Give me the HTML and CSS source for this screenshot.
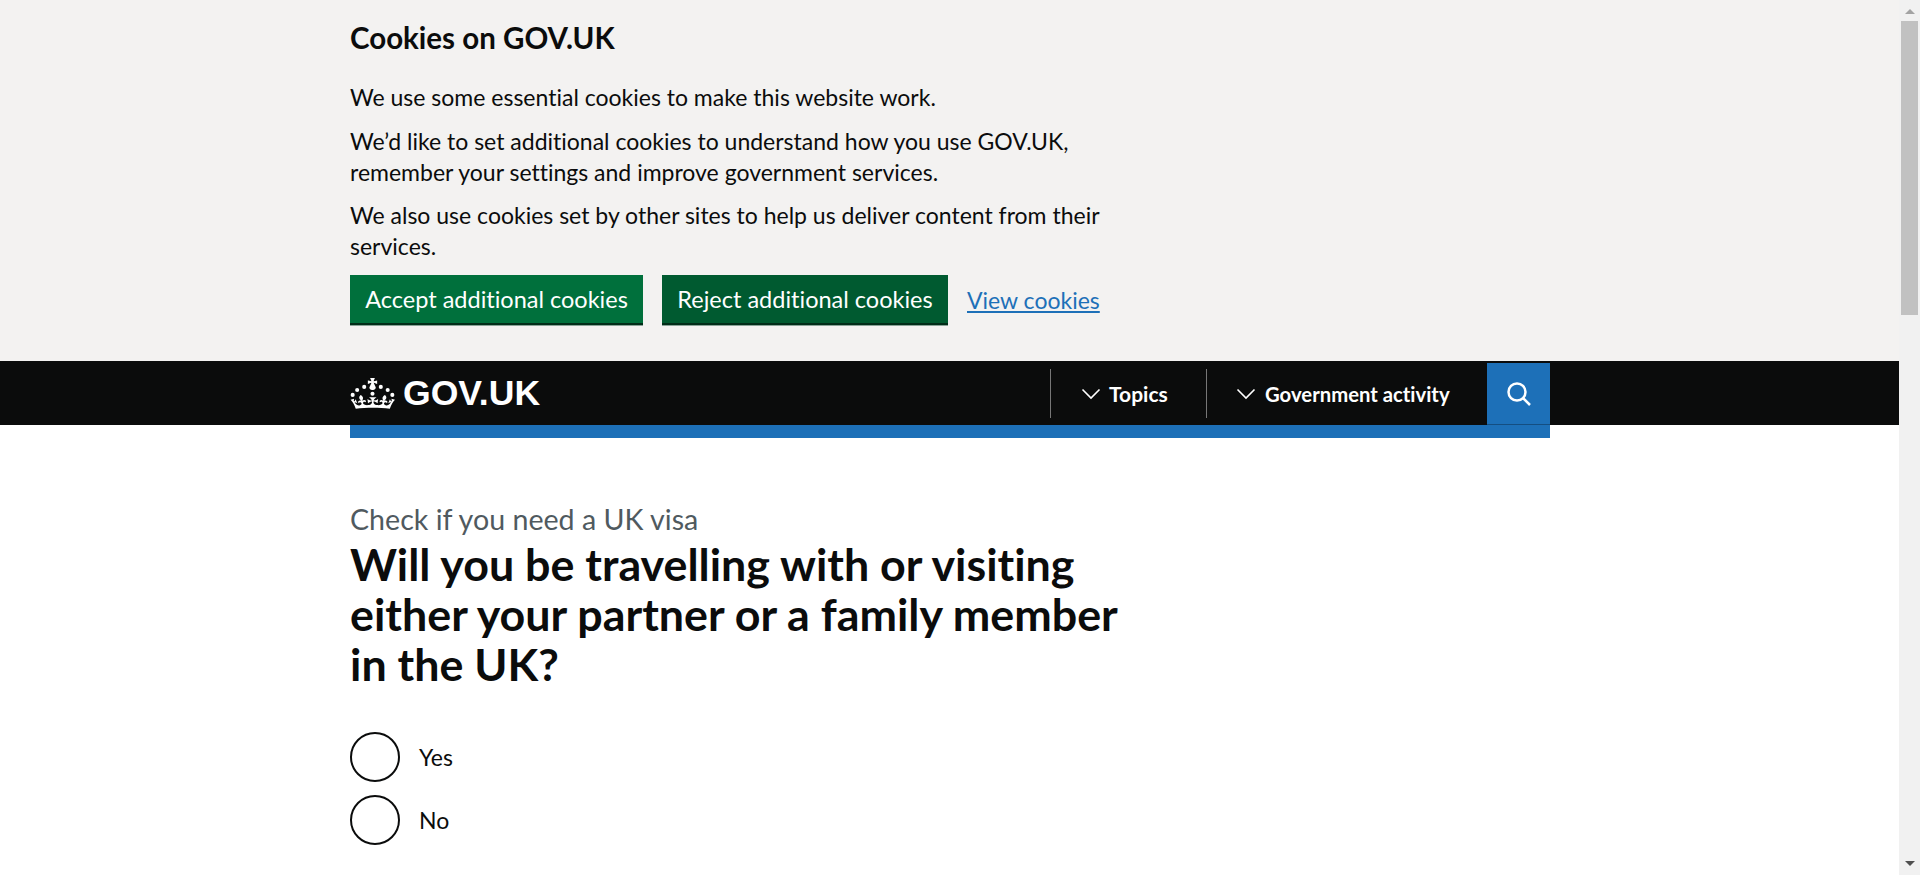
FILE: index.html
```html
<!DOCTYPE html>
<html lang="en">
<head>
<meta charset="utf-8">
<title>Check if you need a UK visa - GOV.UK</title>
<link rel="stylesheet" href="styles.css">
</head>
<body>
<div class="page">
  <section class="cookie-banner">
    <div class="container">
      <h2 class="cookie-title">Cookies on GOV.UK</h2>
      <div class="cookie-text">
        <p>We use some essential cookies to make this website work.</p>
        <p>We’d like to set additional cookies to understand how you use GOV.UK, remember your settings and improve government services.</p>
        <p>We also use cookies set by other sites to help us deliver content from their services.</p>
      </div>
      <div class="cookie-actions">
        <button class="btn btn-accept">Accept additional cookies</button>
        <button class="btn btn-reject">Reject additional cookies</button>
        <a class="cookie-link" href="#">View cookies</a>
      </div>
    </div>
  </section>
  <header class="header">
    <div class="container header-inner">
      <a class="logo" href="#">
        <svg class="crown" viewBox="0 0 32 30.3" preserveAspectRatio="none" aria-hidden="true">
          <ellipse cx="1.9" cy="16.5" rx="1.45" ry="2"/>
          <ellipse cx="5.1" cy="11.7" rx="1.45" ry="2"/>
          <ellipse cx="10.1" cy="8.7" rx="1.45" ry="2"/>
          <ellipse cx="16" cy="15.4" rx="1.45" ry="2"/>
          <ellipse cx="21.9" cy="8.7" rx="1.45" ry="2"/>
          <ellipse cx="26.8" cy="11.7" rx="1.45" ry="2"/>
          <ellipse cx="30.1" cy="16.5" rx="1.45" ry="2"/>
          <path d="M17 4.7l2.3 1.2V2.5l-2.3.7-.2-.2.9-3h-3.4l.9 3-.2.2c-.1.1-2.3-.7-2.3-.7v3.4L15 4.7c.1.1.1.2.2.2l-1.3 4c-.1.2-.1.4-.1.6 0 1.1.8 2 1.9 2.2h.7c1-.2 1.900-1.100 1.900-2.200 0-.2 0-.4-.1-.6l-1.300-4c-.1-.1 0-.2.1-.2z"/>
          <path d="M16 29.2c4.400 0 8.600.3 12.300.8 1.100-4.500 2.400-7 3.700-8.800l-2.500-.9c.2 1.300.3 1.900 0 2.700-.4-.4-.8-1.100-1.100-2.300l-1.200 4c.7-.5 1.300-.8 2-.9-1.100 2.500-2.600 3.100-3.500 3-1.100-.2-1.700-1.200-1.500-2.100.3-1.200 1.500-1.500 2.100-.1 1.100-2.300-.8-3-2-2.300 1.900-1.900 2.100-3.500.6-5.600-2.100 1.600-2.100 3.200-1.200 5.500-1.200-1.400-3.200-.6-2.500 1.600.9-1.400 2.100-.5 1.900.8-.2 1.100-1.700 2.100-3.500 1.900-2.700-.2-2.900-2.100-2.900-3.600.7-.1 1.900.5 2.900 1.900l.4-4.300c-1.100 1.100-2.100 1.400-3.200 1.400.4-1.200 2.100-3 2.100-3h-5.400s1.700 1.900 2.100 3c-1.100 0-2.100-.2-3.200-1.400l.4 4.300c1-1.400 2.200-2 2.900-1.900-.1 1.500-.2 3.400-2.900 3.600-1.900.2-3.400-.8-3.500-1.900-.2-1.300 1-2.200 1.900-.8.7-2.300-1.200-3-2.500-1.600.9-2.200.9-3.900-1.200-5.500-1.500 2-1.300 3.700.6 5.600-1.200-.7-3.100 0-2 2.300.6-1.400 1.800-1.100 2.100.1.2.9-.3 1.900-1.500 2.100-.9.2-2.400-.5-3.500-3 .6 0 1.200.3 2 .9l-1.200-4c-.3 1.100-.7 1.900-1.100 2.300-.3-.8-.2-1.400 0-2.700l-2.500.9c1.300 1.900 2.700 4.300 3.700 8.800 3.700-.5 7.900-.8 12.300-.8z"/>
        </svg>
        <span class="logo-text">GOV.UK</span>
      </a>
      <nav class="nav">
        <a class="nav-item nav-topics" href="#"><svg class="chevron" viewBox="0 0 20 12" aria-hidden="true"><path d="M1.5 1.5 10 10l8.5-8.5"/></svg>Topics</a>
        <a class="nav-item nav-activity" href="#"><svg class="chevron" viewBox="0 0 20 12" aria-hidden="true"><path d="M1.5 1.5 10 10l8.5-8.5"/></svg>Government activity</a>
        <button class="search-btn" aria-label="Search"><svg class="search-icon" viewBox="0 0 24 24" aria-hidden="true"><circle cx="10" cy="10" r="8.5"/><path d="m16 16 7 7"/></svg></button>
      </nav>
    </div>
  </header>
  <div class="container"><div class="blue-bar"></div></div>
  <main class="container main">
    <span class="caption">Check if you need a UK visa</span>
    <h1 class="question">Will you be travelling with or visiting either your partner or a family member in the UK?</h1>
    <div class="radios">
      <label class="radio"><span class="radio-circle"></span>Yes</label>
      <label class="radio"><span class="radio-circle"></span>No</label>
    </div>
  </main>
</div>
<div class="scrollbar" aria-hidden="true">
  <span class="arrow arrow-up"></span>
  <span class="thumb"></span>
  <span class="spacer"></span>
  <span class="arrow arrow-down"></span>
</div>
</body>
</html>
```

FILE: styles.css
```css
* { box-sizing: border-box; }
html, body { margin: 0; height: 875px; overflow: hidden; }
body {
  display: flex;
  background: #fff;
  color: #0b0c0c;
  font-family: Lato, "Liberation Sans", sans-serif;
  font-variant-ligatures: none;
}
.page { flex: 1; min-width: 0; height: 875px; overflow: hidden; }
.container { width: 1200px; margin-left: 350px; }

.cookie-banner { background: #f3f2f1; height: 361px; padding-top: 20px; }
.cookie-title { margin: 0 0 26px; font-size: 29.5px; line-height: 36px; font-weight: 700; }
.cookie-text { width: 780px; font-size: 23px; line-height: 31px; }
.cookie-text p { margin: 0 0 12px; }
.cookie-text p:first-child { margin-bottom: 13px; }
.cookie-actions { display: flex; align-items: center; margin-top: 13px; }
.btn {
  height: 50px;
  padding: 0 0 2px;
  border: 0;
  color: #fff;
  font: inherit;
  font-size: 23.5px;
}
.btn-accept { width: 293px; margin-right: 19px; background: #00703c; box-shadow: inset 0 -2px 0 #002d18, 0 1px 0 #8aa398; }
.btn-reject { width: 286px; margin-right: 19px; background: #005a30; box-shadow: inset 0 -2px 0 #002d18, 0 1px 0 #8aa398; }
.cookie-link { color: #1d70b8; font-size: 23px; text-underline-offset: 2px; }

.header { background: #0b0c0c; height: 64px; color: #fff; }
.header-inner { display: flex; justify-content: space-between; height: 64px; }
.logo { display: flex; align-items: center; gap: 8px; color: #fff; text-decoration: none; }
.crown { width: 45px; height: 31px; fill: currentColor; }
.logo-text { padding-top: 2px; font-family: "Liberation Sans", sans-serif; font-weight: 700; font-size: 35.6px; line-height: 1; }
.nav { display: flex; }
.nav-item {
  display: flex;
  align-items: center;
  height: 49px;
  margin-top: 8px;
  border-left: 1px solid #777;
  color: #fff;
  font-size: 20.3px;
  font-weight: 700;
  text-decoration: none;
}
.nav-topics { width: 156px; padding-left: 30px; font-size: 21px; }
.nav-activity { width: 281px; padding-left: 29px; }
.chevron { width: 20px; height: 12px; margin-right: 8px; fill: none; stroke: #fff; stroke-width: 1.6; }
.nav-activity .chevron { margin-right: 9px; }
.search-btn {
  width: 63px;
  height: 62px;
  margin-top: 2px;
  padding: 0;
  border: 0;
  border-bottom: 1px solid #144e81;
  background: #1d70b8;
}
.search-icon { display: block; width: 24px; height: 24px; margin: 0 auto; fill: none; stroke: #fff; stroke-width: 2.5; }
.blue-bar { height: 13px; background: #1d70b8; }

.main { padding-top: 66px; }
.caption { display: block; color: #505a5f; font-size: 28.6px; line-height: 30px; }
.question { width: 800px; margin: 5px 0 0; font-size: 44.8px; line-height: 50px; font-weight: 700; }
.radios { margin-top: 43px; }
.radio { display: flex; align-items: center; gap: 19px; height: 50px; margin-bottom: 13px; font-size: 23px; }
.radio-circle { width: 50px; height: 50px; border: 2px solid #0b0c0c; border-radius: 50%; }

.scrollbar { display: flex; flex-direction: column; align-items: center; width: 21px; height: 875px; background: #f1f1f1; }
.arrow { width: 0; height: 0; border-left: 5px solid transparent; border-right: 5px solid transparent; }
.arrow-up { margin: 9px 0 7px; border-bottom: 5px solid #a3a3a3; }
.thumb { flex: none; width: 17px; height: 294px; background: #c1c1c1; }
.spacer { flex: 1; }
.arrow-down { margin: 0 0 9px; border-top: 5px solid #505050; }
```
